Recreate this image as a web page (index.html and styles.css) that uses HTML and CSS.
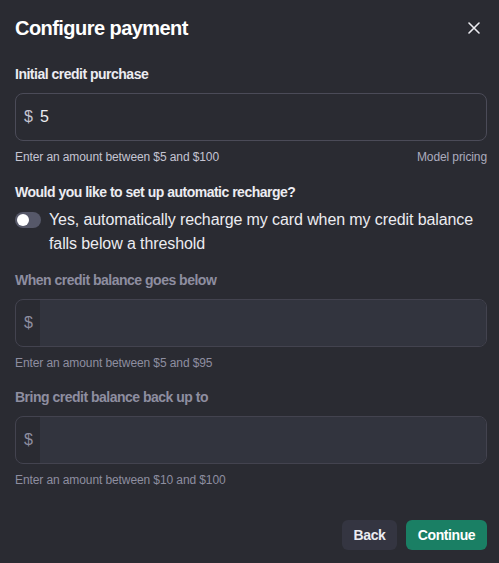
FILE: index.html
```html
<!DOCTYPE html>
<html>
<head>
<meta charset="utf-8">
<link rel="stylesheet" href="styles.css">
</head>
<body>
<div class="dialog">
  <div class="header">
    <h1 class="title">Configure payment</h1>
    <button class="close" aria-label="Close">
      <svg width="12" height="12" viewBox="0 0 12 12"><path d="M1 1L11 11M11 1L1 11" stroke="#ececf1" stroke-width="1.6" stroke-linecap="round"/></svg>
    </button>
  </div>

  <div class="field">
    <div class="label">Initial credit purchase</div>
    <div class="input active">
      <span class="prefix">$</span>
      <span class="value">5</span>
    </div>
    <div class="help-row">
      <span class="help">Enter an amount between $5 and $100</span>
      <span class="help link">Model pricing</span>
    </div>
  </div>

  <div class="recharge">
    <div class="label">Would you like to set up automatic recharge?</div>
    <div class="toggle-row">
      <span class="toggle"><span class="knob"></span></span>
      <span class="toggle-text">Yes, automatically recharge my card when my credit balance falls below a threshold</span>
    </div>
  </div>

  <div class="field disabled">
    <div class="label">When credit balance goes below</div>
    <div class="input">
      <span class="prefix">$</span>
      <span class="fill"></span>
    </div>
    <div class="help-row">
      <span class="help">Enter an amount between $5 and $95</span>
    </div>
  </div>

  <div class="field disabled">
    <div class="label">Bring credit balance back up to</div>
    <div class="input">
      <span class="prefix">$</span>
      <span class="fill"></span>
    </div>
    <div class="help-row">
      <span class="help">Enter an amount between $10 and $100</span>
    </div>
  </div>

  <div class="actions">
    <button class="btn back">Back</button>
    <button class="btn continue">Continue</button>
  </div>
</div>
</body>
</html>
```
FILE: styles.css
```css
* { box-sizing: border-box; }
html, body {
  margin: 0;
  padding: 0;
  background: #2a2b32;
  font-family: "Liberation Sans", Arial, sans-serif;
  color: #ececf1;
}
.dialog {
  width: 499px;
  height: 563px;
  padding: 14px 12px 0 15px;
  display: flex;
  flex-direction: column;
}
.header {
  display: flex;
  justify-content: space-between;
  align-items: center;
  height: 28px;
}
.title {
  margin: 0;
  font-size: 20px;
  font-weight: 700;
  color: #ffffff;
  letter-spacing: -0.55px;
}
.close {
  background: none;
  border: none;
  padding: 0;
  width: 16px;
  height: 16px;
  display: flex;
  align-items: center;
  justify-content: center;
  margin-right: 5px;
}
.field { display: flex; flex-direction: column; }
.label {
  font-size: 14px;
  font-weight: 700;
  color: #ececf1;
  line-height: 20px;
  letter-spacing: -0.5px;
}
.header + .field { margin-top: 22px; }
.field .label { margin-bottom: 9px; }
.input {
  height: 48px;
  border: 1px solid #4b4b58;
  border-radius: 8px;
  display: flex;
  align-items: center;
  overflow: hidden;
  font-size: 16px;
}
.prefix {
  width: 24px;
  padding-left: 8px;
  height: 100%;
  display: flex;
  align-items: center;
  color: #c5c5d2;
}
.value { color: #ececf1; margin-left: 0; }
.fill { flex: 1; height: 100%; background: #32343e; }
.help-row {
  display: flex;
  justify-content: space-between;
  margin-top: 8px;
  line-height: 16px;
}
.help { font-size: 12px; color: #c5c5d2; letter-spacing: -0.1px; }
.help.link { color: #acacbe; }
.recharge { margin-top: 17px; }
.recharge .label { margin-bottom: 6px; }
.toggle-row { display: flex; align-items: flex-start; gap: 8px; }
.toggle {
  margin-top: 4px;
  width: 26px;
  height: 16px;
  border-radius: 8px;
  background: #565869;
  position: relative;
  flex-shrink: 0;
}
.knob {
  position: absolute;
  left: 2px;
  top: 2px;
  width: 12px;
  height: 12px;
  border-radius: 50%;
  background: #ffffff;
}
.toggle-text { font-size: 16px; line-height: 24px; color: #ececf1; letter-spacing: -0.1px; }
.recharge + .field { margin-top: 14px; }
.field.disabled + .field.disabled { margin-top: 16px; }
.field.disabled .label { color: #8e8ea0; }
.field.disabled .help { color: #8e8ea0; }
.field.disabled .input { border-color: #43434f; }
.field.disabled .prefix { color: #8e8ea0; }
.actions {
  margin-top: auto;
  margin-bottom: 13px;
  display: flex;
  justify-content: flex-end;
  gap: 9px;
}
.btn {
  height: 30px;
  border: none;
  border-radius: 6px;
  font-family: inherit;
  font-size: 14px;
  font-weight: 700;
  padding: 0;
  color: #ececf1;
  letter-spacing: -0.4px;
}
.back { background: #343541; width: 55px; }
.continue { background: #1a7f64; color: #ffffff; width: 81px; }
```
